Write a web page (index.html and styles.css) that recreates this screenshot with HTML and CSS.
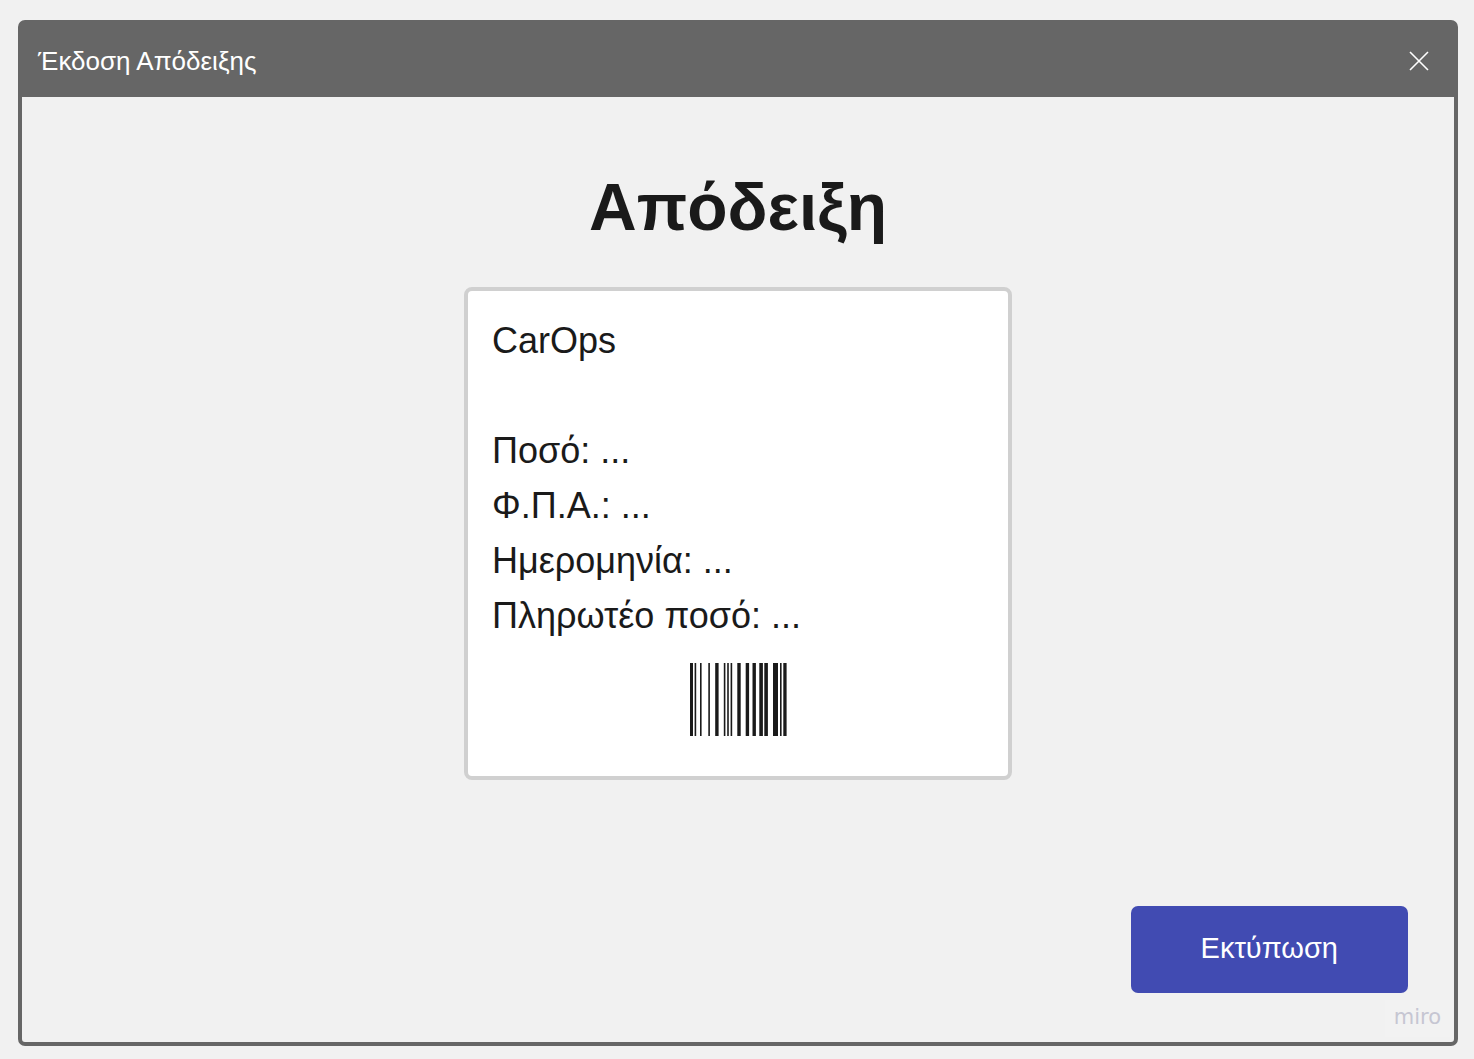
FILE: index.html
```html
<!DOCTYPE html>
<html lang="el">
<head>
<meta charset="utf-8">
<meta name="viewport" content="width=device-width, initial-scale=1">
<title>Έκδοση Απόδειξης</title>
<link rel="stylesheet" href="styles.css">
</head>
<body>
<section class="window">
  <header class="titlebar">
    <span class="titlebar-text">Έκδοση Απόδειξης</span>
    <button class="close" type="button" aria-label="Κλείσιμο">
      <svg width="20" height="20" viewBox="0 0 20 20" fill="none" stroke="currentColor" stroke-width="1.600"><path d="M1 1 19 19M19 1 1 19"/></svg>
    </button>
  </header>
  <main class="content">
    <h1 class="heading">Απόδειξη</h1>
    <article class="receipt">
      <p class="company">CarOps</p>
      <p>Ποσό: ...</p>
      <p>Φ.Π.Α.: ...</p>
      <p>Ημερομηνία: ...</p>
      <p>Πληρωτέο ποσό: ...</p>
      <svg class="barcode" width="97" height="73" viewBox="0 0 97 73" fill="currentColor" aria-hidden="true">
        <path d="M0 0h3v73H0zM4.600 0h1.600v73H4.600zM10 0h1.600v73H10zM18.300 0h1.600v73H18.300zM25.200 0h3.400v73H25.200zM33.800 0h1.600v73H33.800zM37.200 0h1.600v73H37.200zM40.600 0h1.600v73H40.600zM47.300 0h3.400v73H47.300zM55.700 0h3.400v73H55.700zM62.500 0h3.400v73H62.500zM69.300 0h3.600v73H69.300zM74.300 0h3.600v73H74.300zM83 0h5v73H83zM90 0h1.600v73H90zM93.300 0h3.300v73H93.300z"/>
      </svg>
    </article>
    <footer class="actions">
      <button class="print" type="button">Εκτύπωση</button>
    </footer>
  </main>
  <span class="watermark">miro</span>
</section>
</body>
</html>
```
FILE: styles.css
```css
* {
  box-sizing: border-box;
}

body {
  margin: 0;
  min-height: 100vh;
  display: flex;
  padding: 20px 16px 13px 18px;
  background: #f1f1f1;
  color: #1a1a1a;
  font-family: "Liberation Sans", Arial, sans-serif;
}

button {
  border: 0;
  font-family: inherit;
  cursor: pointer;
}

.window {
  position: relative;
  flex: 1;
  display: flex;
  flex-direction: column;
  border: 4px solid #666;
  border-radius: 7px;
  background: #f1f1f1;
}

.titlebar {
  display: flex;
  align-items: center;
  justify-content: space-between;
  padding: 19px 17px 18px 16px;
  background: #666;
  color: #fff;
  font-size: 26px;
  line-height: 36px;
}

.close {
  display: flex;
  padding: 8px;
  background: none;
  color: inherit;
}

.content {
  flex: 1;
  display: flex;
  flex-direction: column;
  align-items: center;
  padding: 70px 46px 49px;
}

.heading {
  margin: 0 0 40px;
  font-size: 66px;
  line-height: 80px;
}

.receipt {
  display: flex;
  flex-direction: column;
  width: 100%;
  max-width: 548px;
  padding: 22px 24px 40px;
  border: 4px solid #d0d0d0;
  border-radius: 8px;
  background: #fff;
  font-size: 36px;
  line-height: 55px;
}

.receipt p {
  margin: 0;
}

.receipt .company {
  margin-bottom: 55px;
}

.barcode {
  align-self: center;
  margin-top: 20px;
}

.actions {
  align-self: stretch;
  display: flex;
  justify-content: flex-end;
  margin-top: auto;
}

.print {
  padding: 23px 70px 25px;
  border-radius: 7px;
  background: #414bb2;
  color: #fff;
  font-size: 29px;
  line-height: 39px;
}

.watermark {
  position: absolute;
  right: 4px;
  bottom: 5px;
  padding: 3px 9px 5px;
  background: #f2f2f2;
  color: #c6c6d2;
  font-family: "DejaVu Sans", sans-serif;
  font-size: 21px;
  line-height: 29px;
}
```
